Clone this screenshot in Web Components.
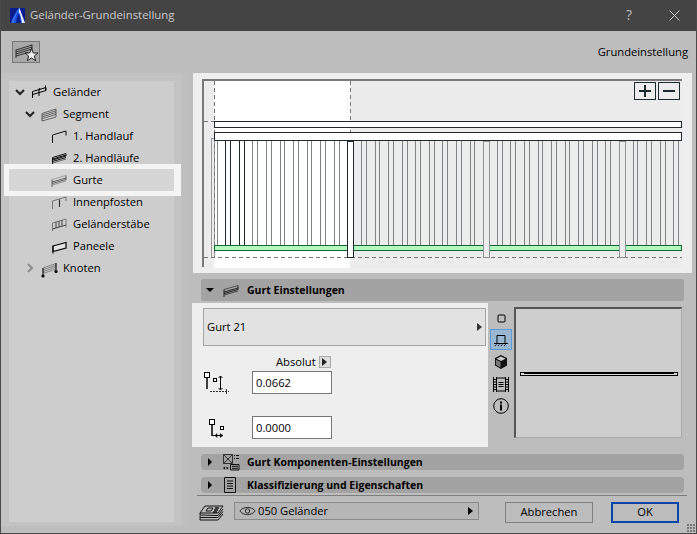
<!DOCTYPE html>
<html lang="de"><head><meta charset="utf-8"><title>Geländer-Grundeinstellung</title>
<style>
html,body{margin:0;padding:0;background:#bdbdbd}
body{font:11.2px "Open Sans","Noto Sans",sans-serif;color:#000}
</style></head><body>
<x-dialog>
  <x-titlebar slot="title">Geländer-Grundeinstellung</x-titlebar>
  <x-toolbar slot="toolbar">Grundeinstellung</x-toolbar>
  <x-tree slot="tree">
    <x-tree-item level="0" icon="rail" arrow="open">Geländer</x-tree-item>
    <x-tree-item level="1" icon="segment" arrow="open">Segment</x-tree-item>
    <x-tree-item level="2" icon="hand1">1. Handlauf</x-tree-item>
    <x-tree-item level="2" icon="hand2">2. Handläufe</x-tree-item>
    <x-tree-item level="2" icon="gurte" selected>Gurte</x-tree-item>
    <x-tree-item level="2" icon="posts">Innenpfosten</x-tree-item>
    <x-tree-item level="2" icon="bars">Geländerstäbe</x-tree-item>
    <x-tree-item level="2" icon="panel">Paneele</x-tree-item>
    <x-tree-item level="1" icon="knot" arrow="closed">Knoten</x-tree-item>
  </x-tree>
  <x-preview slot="preview"></x-preview>
  <x-section slot="s1" icon="gurteD" open>Gurt Einstellungen</x-section>
  <x-settings slot="settings"></x-settings>
  <x-section slot="s2" icon="comp">Gurt Komponenten-Einstellungen</x-section>
  <x-section slot="s3" icon="doc">Klassifizierung und Eigenschaften</x-section>
  <x-footer slot="footer"></x-footer>
</x-dialog>
<script>
const ICONS={
rail:'<g fill="none" stroke="#000"><path d="M1.500 14V7.500L15 3.500V6.500L1.500 10.500M8 12V5.600M14.500 6.500V1.500M8 5.600L9 4"/></g>',
segment:'<g fill="#d4d4d4" stroke="#444" stroke-width=".8"><path d="M1 7.500L15 3V11L1 15Z"/><path fill="none" d="M1 9.200L15 4.800M1 11L15 6.500M1 12.800L15 8.400"/></g>',
hand1:'<g fill="none" stroke="#111"><path d="M1.500 15V7L15 3V7.500"/></g>',
hand2:'<g fill="none" stroke="#111"><path d="M1.500 15V7.500L15 3.500V6L1.500 10M1.500 9L15 5M1.500 11.500L15 7.500"/><path stroke="#666" d="M1.500 13L15 9"/></g>',
gurte:'<g fill="none" stroke="#555" stroke-width=".9"><path stroke="#999" d="M1 7.500L15 3.500"/><path d="M1 10L15 6M1 11.500L15 7.500"/><path d="M1 15V7.500M15 3.500V8"/><path stroke="#888" d="M1 13L15 9"/></g>',
gurteD:'<g fill="none" stroke="#222"><path stroke="#555" d="M1 7.500L15 3.500"/><path d="M1 10L15 6M1 11.500L15 7.500"/><path d="M1 15V7.500M15 3.500V8"/><path stroke="#444" d="M1 13L15 9"/></g>',
posts:'<g fill="none" stroke="#333"><path stroke="#777" d="M1.500 15V7L15 3V7"/><path d="M8.500 5.500V13" stroke-width="1.200"/></g>',
bars:'<g fill="none" stroke="#444"><path stroke="#777" d="M1.500 15V7L15 3V11.500"/><path d="M1.500 13L15 9M5 6V12M8 5V11M11 4.200V10.200"/></g>',
panel:'<g fill="#e4e4e4" stroke="#000" stroke-width="1.200"><path d="M2 8L15 4.500V10L2 13.500Z"/></g><path d="M2 8V15.500" stroke="#000"/>',
knot:'<g fill="none" stroke="#777" stroke-width=".9"><path d="M2 8L15 3.500V9L2 13.500ZM2 9.800L15 5.300M2 11.600L15 7"/></g><path d="M2 8V16M15 3V11" stroke="#111"/><circle cx="2" cy="16" r="1.600"/><circle cx="15" cy="11.500" r="1.600"/>',
comp:'<g fill="none" stroke="#111"><path d="M1.500 1.500H10.500V10.500H1.500ZM1.500 1.500L10.500 10.500M10.500 1.500L1.500 10.500" stroke="#333"/><path d="M12 2.500H13M14 2.500H17M12 5.500H13M14 5.500H17"/><path d="M8.500 11.500H17V17H8.500ZM10 13.300H16M10 15.300H16"/></g><path d="M1 15L3 13.500V16.500ZM6.500 15L4.500 13.500V16.500Z"/>',
doc:'<g fill="none" stroke="#111"><path d="M2.500 1.500H13.500V16.500H2.500Z"/><path d="M5 5H11M5 7.500H11M5 10H11M5 12.500H11"/></g>'
};
const icon=(n,s=16)=>`<svg style="overflow:visible" width="${s}" height="${s}" viewBox="0 0 ${n==='comp'||n==='doc'?18:16} ${n==='comp'||n==='doc'?18:16}">${ICONS[n]||''}</svg>`;
function define(tag,css,html){
  customElements.define(tag,class extends HTMLElement{
    connectedCallback(){
      if(this.shadowRoot)return;
      const r=this.attachShadow({mode:'open'});
      r.innerHTML=`<style>${css}</style>`+(typeof html==='function'?html(this):html);
    }
  });
}
const TXT='padding-bottom:2px';
define('x-dialog',`
:host{display:flex;flex-direction:column;width:697px;height:534px;box-sizing:border-box;background:#bdbdbd;border:solid #4a4a4a;border-width:0 1px 1px 1px;position:relative;overflow:hidden}
.main{display:flex;flex:1;min-height:0}
.left{width:165px;padding:8px 8px 4px 8px;flex:none;display:flex;align-self:flex-start;background:#c3c3c3;border-right:4px solid #bfbfbf}
.right{flex:none;width:499px;margin-left:7px;display:flex;flex-direction:column}
.grip{position:absolute;right:1px;bottom:1px;width:8px;height:8px;background:radial-gradient(circle at 1px 1px,#777 1px,transparent 1.200px) 0 0/3px 3px}
`,`<slot name="title"></slot><slot name="toolbar"></slot>
<div class="main"><div class="left"><slot name="tree"></slot></div>
<div class="right"><slot name="preview"></slot><slot name="s1"></slot><slot name="settings"></slot><slot name="s2"></slot><slot name="s3"></slot><slot name="footer"></slot></div></div><div class="grip"></div>`);
define('x-titlebar',`
:host{display:flex;align-items:center;height:31px;background:#444;color:#c9c9c9;font-size:11.400px;flex:none;margin:0 -1px}
svg{margin:0 5px 0 10px;flex:none}
.t{flex:1;${TXT}}
.q{width:14px;text-align:center;font-size:14px;margin-right:33px;color:#bbb;${TXT}}
.x{margin:0 17px 0 0}
`,`<svg width="15" height="15" viewBox="0 0 15 15"><rect width="15" height="15" fill="#0a1d8c"/><path d="M1 15C4 7 7 2 9 0H10L7.500 5C6 8 5 12 4.500 15Z" fill="#2f6cf0"/><path d="M4.500 15C5 11 7 6 9.500 1L14 15H11C10.500 11 9.500 7 8.500 6C7 9 6.500 12 6 15Z" fill="#1d50e8"/><path d="M9.500 0L15 15H12C11 9 10 5 8.500 4Z" fill="#e8edff"/></svg><span class="t"><slot></slot></span><span class="q">?</span><svg class="x" width="11" height="11" viewBox="0 0 11 11"><path d="M.500.500L10.500 10.500M10.500.500L.500 10.500" stroke="#c9c9c9" fill="none"/></svg>`);
define('x-toolbar',`
:host{display:flex;align-items:center;justify-content:space-between;height:42px;flex:none;padding:0 8px 0 11px}
.b{width:26px;height:20px;border:1px solid #777;background:#a9a9a9;display:flex;align-items:center;justify-content:center}
span{${TXT}}
`,`<div class="b"><svg width="26" height="20" viewBox="0 0 26 20"><g fill="none" stroke="#222" stroke-width=".9"><path d="M3 8L19 3M3 10L19 5M3 12L19 7M3 14L15 10.500M3 16V7.500M19 2.500V8"/></g><path d="M18.500 6.500L20.300 11H25L21.300 14L22.700 18.700L18.500 16L14.300 18.700L15.700 14L12 11H16.700Z" fill="#eee" stroke="#111" stroke-width=".9"/></svg></div><span><slot></slot></span>`);
define('x-tree',`:host{display:block;width:165px;height:441px;background:#cdcdcd;flex:none}`,`<slot></slot>`);
define('x-tree-item',`
:host{display:flex;align-items:center;height:22px;position:relative;white-space:nowrap}
:host([selected]){background:#d6d6d6;box-shadow:0 0 0 5px #f4f4f4,2px 0 0 5px #f4f4f4}
.c{width:10px;height:10px;flex:none}
.i{width:16px;height:16px;flex:none;margin:0 6px;display:block}
.l{${TXT}}
`,h=>{
 const lv=+h.getAttribute('level'),a=h.getAttribute('arrow');
 const ch=a==='open'?'<path d="M1 3L5 7L9 3" fill="none" stroke="#222" stroke-width="2"/>':a==='closed'?'<path d="M3 1L7 5L3 9" fill="none" stroke="#888" stroke-width="1.800"/>':'';
 return `<span style="width:${6+10*lv}px;flex:none"></span><svg class="c" viewBox="0 0 10 10">${ch}</svg><span class="i">${icon(h.getAttribute('icon'))}</span><span class="l"><slot></slot></span>`;
});
define('x-preview',`
:host{display:block;height:200px;background:#eeeeee;flex:none}
svg{display:block}
`,()=>{
 let d='';
 const xs=[];
 for(let x=225.7;x<680;x+=13.58){xs.push(Math.floor(x)+.5);xs.push(Math.floor(x+4.8)+.5);}
 xs.forEach((x,i)=>{d+=`<path d="M${x-193} 68V172" stroke="${i<4?'#1d2a30':'#7f8486'}"/>`;});
 const post=x=>`<rect x="${x}" y="68" width="6" height="116" fill="#ececec" stroke="#8d9294"/>`;
 return `<svg width="499" height="200" viewBox="0 0 499 200" shape-rendering="crispEdges">
 <rect x="9" y="7" width="480" height="188" fill="#ececec"/><rect x="21" y="8" width="136" height="187" fill="#fff"/>
 <rect x="9" y="6" width="480" height="2" fill="#7a7a7a"/><rect x="9" y="6" width="2" height="188" fill="#7a7a7a"/>
 <path d="M24.500 68V172" stroke="#7f8486"/>
 ${d}
 <rect x="18.500" y="65" width="3" height="119" fill="none" stroke="#999"/>
 <path d="M21.500 8V185M157.500 8V185M11 48.500H21M11 184.500H489" stroke="#777" stroke-dasharray="4 3" fill="none"/>
 <rect x="21.500" y="48.500" width="467" height="6" fill="#fff" stroke="#1d2a30"/>
 <rect x="21.500" y="59.500" width="467" height="8" fill="#fff" stroke="#1d2a30"/>
 <rect x="21.500" y="172.500" width="467" height="5" fill="#b4f8c0" stroke="#0b6a34"/>
 ${post(290.5)}${post(426.5)}
 <rect x="154.500" y="68" width="6" height="116" fill="#fff" stroke="#1d2a30"/>
 <rect x="441.500" y="9.500" width="21" height="17" fill="#ededed" stroke="#1d2a30"/>
 <rect x="465.500" y="9.500" width="21" height="17" fill="#ededed" stroke="#1d2a30"/>
 <path d="M446 18H458M452 12V24M470 18H482" stroke="#1d2a30" stroke-width="2"/>
 </svg>`});
define('x-section',`
:host{display:flex;align-items:center;height:16px;margin:7px 8px 0 8px;background:#a3a3a3;border-radius:4px;font-weight:700;font-size:10.500px;flex:none}
:host([open]){height:22px;margin-top:6px;border-radius:2px}
.a{width:17px;flex:none;display:flex;justify-content:center;margin-right:4px}
.i{width:18px;height:18px;flex:none;margin-right:7px;display:flex;align-items:center;justify-content:center}
`,h=>{const o=h.hasAttribute('open');return `<span class="a"><svg width="8" height="8" viewBox="0 0 8 8"><path d="${o?'M0 2H8L4 6Z':'M2 0L6 4L2 8Z'}"/></svg></span><span class="i">${icon(h.getAttribute('icon'),o?16:18)}</span><span><slot></slot></span>`});
define('x-settings',`
:host{display:flex;height:144px;flex:none;margin:2px 0 0 -1px}
.p{width:296px;flex:none;background:#eeeeee;box-sizing:border-box;padding:5px 2px 0 11px}
.choose{height:38px;box-sizing:border-box;border:1px solid #a6a6a6;background:#e2e2e2;display:flex;align-items:center;justify-content:space-between;padding:0 3px}
.choose span,.abs span:first-child{${TXT}}
.abs{display:flex;align-items:center;height:14px;margin:9px 0 0 73px;gap:3px}
.mini{width:12px;height:12px;box-sizing:border-box;border:1px solid #aaa;background:#ddd;display:flex;align-items:center;justify-content:center}
.row{display:flex;align-items:center;height:23px;margin-top:2px}
.row+.row{margin-top:22px}
.ic{width:49px;flex:none}
.in{width:80px;height:23px;box-sizing:border-box;border:1px solid #777;background:#fff;padding:0 3px;line-height:21px}
.side{width:26px;flex:none;display:flex;flex-direction:column;align-items:center;padding-top:4px;box-sizing:border-box}
.side span{width:22px;height:22px;display:flex;align-items:center;justify-content:center;box-sizing:border-box;flex:none}
.side .on{background:#99b7d3;border:1px solid #5b9bd8;height:21px}
.side .on + span{margin-top:1px}
.view{width:168px;height:131px;box-sizing:border-box;margin-top:4px;background:#cecece;border:solid;border-width:2px 1px 1px 2px;border-color:#555 #aaa #aaa #555;display:flex;align-items:center;justify-content:center;padding-top:1px}
.view svg{display:block}
`,`<div class="p">
<div class="choose"><span>Gurt 21</span><svg width="5" height="8" viewBox="0 0 5 8"><path d="M0 0L5 4L0 8Z" fill="#333"/></svg></div>
<div class="abs"><span>Absolut</span><span class="mini"><svg width="5" height="8" viewBox="0 0 5 8"><path d="M0 0L5 4L0 8Z" fill="#222"/></svg></span></div>
<div class="row"><span class="ic"><svg width="26" height="26" viewBox="0 0 26 26" style="display:block"><rect x="1.500" y="2.500" width="5" height="5" fill="#fff" stroke="#000"/><path d="M4 7V19" stroke="#000" stroke-width="1.500"/><rect x="10.500" y="8.500" width="3" height="3" fill="#fff" stroke="#000"/><path d="M17.500 6V20M15.500 8L17.500 6L19.500 8M15.500 18L17.500 20L19.500 18" stroke="#000" fill="none"/><path d="M7 21.500H26M23.500 19V24" stroke="#333" stroke-dasharray="2 1" fill="none"/></svg></span><span class="in">0.0662</span></div>
<div class="row"><span class="ic"><svg width="26" height="24" viewBox="0 0 26 24" style="display:block"><rect x="6.500" y="3.500" width="5" height="5" fill="#fff" stroke="#000"/><path d="M9 8V20" stroke="#000" stroke-width="1.500"/><rect x="17.500" y="10.500" width="3" height="3" fill="#fff" stroke="#000"/><path d="M9 19.500H20" stroke="#000"/><path d="M12 19.500L14 17.500V21.500ZM20 19.500L17 17.500V21.500Z" fill="#000" stroke="#000" stroke-width=".4"/></svg></span><span class="in">0.0000</span></div>
</div>
<div class="side">
<span><svg width="9" height="9" viewBox="0 0 9 9"><rect x="1" y="1" width="7" height="7" rx="1" fill="none" stroke="#000"/></svg></span>
<span class="on"><svg width="14" height="15" viewBox="0 0 14 15"><path d="M3 11V3.500H11V11M0 11.500H14" fill="none" stroke="#000"/><path d="M1 14L2.500 12.500M4 14L5.500 12.500M7 14L8.500 12.500M10 14L11.500 12.500" stroke="#000"/></svg></span>
<span><svg width="14" height="14" viewBox="0 0 14 14"><path d="M7 0L13 3V10.500L7 14L1 10.500V3Z" fill="#111"/><path d="M7 1.500L11.500 3.800L7 6L2.500 3.800Z" fill="#ccc"/><path d="M2 4.800L6.500 7V12.500L2 10Z" fill="#777"/></svg></span>
<span><svg width="16" height="15" viewBox="0 0 16 15"><path d="M.500 0V15M3.500 0V15M12.500 0V15M15.500 0V15M3.500 1H12.500M3.500 14H12.500M.500 2.500H3.500M.500 5H3.500M.500 7.500H3.500M.500 10H3.500M.500 12.500H3.500M12.500 2.500H15.500M12.500 5H15.500M12.500 7.500H15.500M12.500 10H15.500M12.500 12.500H15.500M5.500 5.500H10.500M5.500 7.500H10.500M5.500 9.500H10.500" stroke="#000" fill="none"/></svg></span>
<span><svg width="16" height="16" viewBox="0 0 16 16"><circle cx="8" cy="8" r="7.300" fill="none" stroke="#000"/><rect x="7" y="6.500" width="2" height="6"/><rect x="7" y="3.500" width="2" height="2"/></svg></span>
</div>
<div class="view"><svg width="158" height="4" viewBox="0 0 158 4"><rect x=".500" y=".500" width="157" height="3" fill="#ddd" stroke="#000"/><rect x="4" y="0" width="150" height="2" fill="#000"/></svg></div>`);
define('x-footer',`
:host{display:flex;align-items:flex-start;flex:none;margin:2px 5px 0 4px;border-top:1px solid #7e7e7e;height:38px;box-sizing:border-box;padding-top:6px}
.ly{width:25px;margin:3px 0 0 2px;flex:none}
.dd{width:245px;height:18px;margin-left:10px;box-sizing:border-box;border:1px solid #8a8a8a;background:#b6b6b6;display:flex;align-items:center;gap:2px;padding:0 5px 0 4px;flex:none}
.dd i{flex:1}
.dd span{${TXT}}
button{font:inherit;color:#000;height:21px;box-sizing:border-box;background:#bcbcbc;padding:0 0 2px;flex:none}
.c{width:88px;border:1px solid #808080;margin-left:26px}
.o{width:68px;border:2px solid #0a46a8;margin-left:18px}
`,`<svg class="ly" width="25" height="16" viewBox="0 0 25 16"><g fill="none" stroke="#111"><path d="M6 1H24L19 8H1Z"/><path d="M1 8V10L19 10.500L24 4M1 10.500V12.500H19L24 6.500M1 13V15H19L24 9"/><path d="M9 3H14L12 6H7Z"/><path d="M16 3H20M15 5H19M14 7H18" stroke-width="1.500"/></g></svg>
<div class="dd"><svg width="17" height="12" viewBox="0 0 18 12"><path d="M1 6C4 1 14 1 17 6C14 11 4 11 1 6Z" fill="none" stroke="#222"/><circle cx="9" cy="6" r="2.300" fill="none" stroke="#222"/></svg><span>050 Geländer</span><i></i><svg width="5" height="8" viewBox="0 0 5 8"><path d="M0 0L5 4L0 8Z"/></svg></div>
<button class="c">Abbrechen</button><button class="o">OK</button>`);
</script>
</body></html>
